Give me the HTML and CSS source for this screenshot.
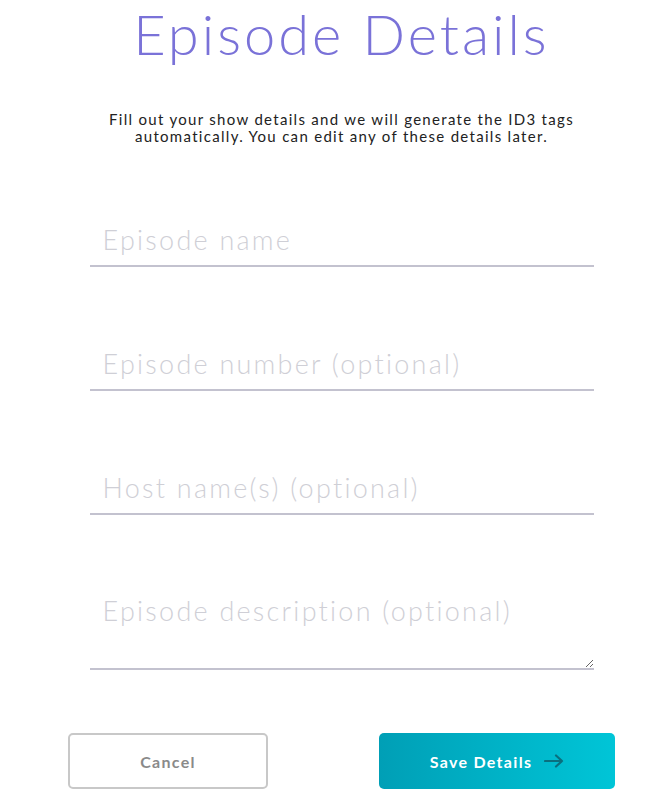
FILE: index.html
```html
<!DOCTYPE html>
<html>
<head>
<meta charset="utf-8">
<link rel="stylesheet" href="styles.css">
</head>
<body>
<main class="page">
  <h1 class="title">Episode Details</h1>
  <p class="intro">Fill out your show details and we will generate the ID3 tags<br>automatically. You can edit any of these details later.</p>
  <form class="form">
    <input class="field" type="text" placeholder="Episode name">
    <input class="field" type="text" placeholder="Episode number (optional)">
    <input class="field" type="text" placeholder="Host name(s) (optional)">
    <textarea class="field area" placeholder="Episode description (optional)"></textarea>
    <div class="actions">
      <button type="button" class="btn cancel">Cancel</button>
      <button type="button" class="btn save">Save Details
        <svg class="arrow" width="20" height="14" viewBox="0 0 20 14"><path d="M1 7H18M12 1.5L18 7L12 12.5" fill="none" stroke="#0a6f7e" stroke-width="2.2" stroke-linecap="round" stroke-linejoin="round"/></svg>
      </button>
    </div>
  </form>
</main>
</body>
</html>
```
FILE: styles.css
```css
html, body {
  margin: 0;
  padding: 0;
  background: #ffffff;
}
body {
  font-family: "Lato", "Open Sans", sans-serif;
}
.page {
  width: 547px;
  margin-left: 68px;
  display: flex;
  flex-direction: column;
  align-items: center;
}
.title {
  margin: 0;
  padding-top: 2px;
  font-size: 56px;
  font-weight: 300;
  line-height: 64px;
  letter-spacing: 3px;
  color: #7a72d8;
}
.intro {
  margin: 45px 0 0 0;
  font-size: 15px;
  line-height: 17px;
  color: #222;
  text-align: center;
  letter-spacing: 1.3px;
}
.form {
  width: 100%;
  display: flex;
  flex-direction: column;
  align-items: center;
  margin-top: 69px;
}
.field {
  box-sizing: border-box;
  width: 504px;
  height: 53px;
  border: none;
  border-bottom: 2px solid #c3c2cf;
  padding: 0 13px;
  font-family: inherit;
  font-size: 27px;
  font-weight: 300;
  color: #333;
  outline: none;
  background: transparent;
  margin-bottom: 71px;
  letter-spacing: 2.25px;
}
.field::placeholder {
  color: #cfcfd6;
}
.area {
  height: 84px;
  padding-top: 8px;
  resize: vertical;
  margin-bottom: 63px;
}
.actions {
  width: 100%;
  display: flex;
  justify-content: space-between;
}
.btn {
  height: 56px;
  border-radius: 5px;
  font-family: inherit;
  font-size: 16px;
  font-weight: 700;
  letter-spacing: 1.3px;
  display: flex;
  align-items: center;
  justify-content: center;
  gap: 12px;
}
.cancel {
  width: 200px;
  background: #fff;
  border: 2px solid #c8c8c8;
  color: #8a8a8a;
}
.save {
  width: 236px;
  border: none;
  color: #fff;
  background: linear-gradient(90deg, #009fb6, #00c5d7);
}
```
